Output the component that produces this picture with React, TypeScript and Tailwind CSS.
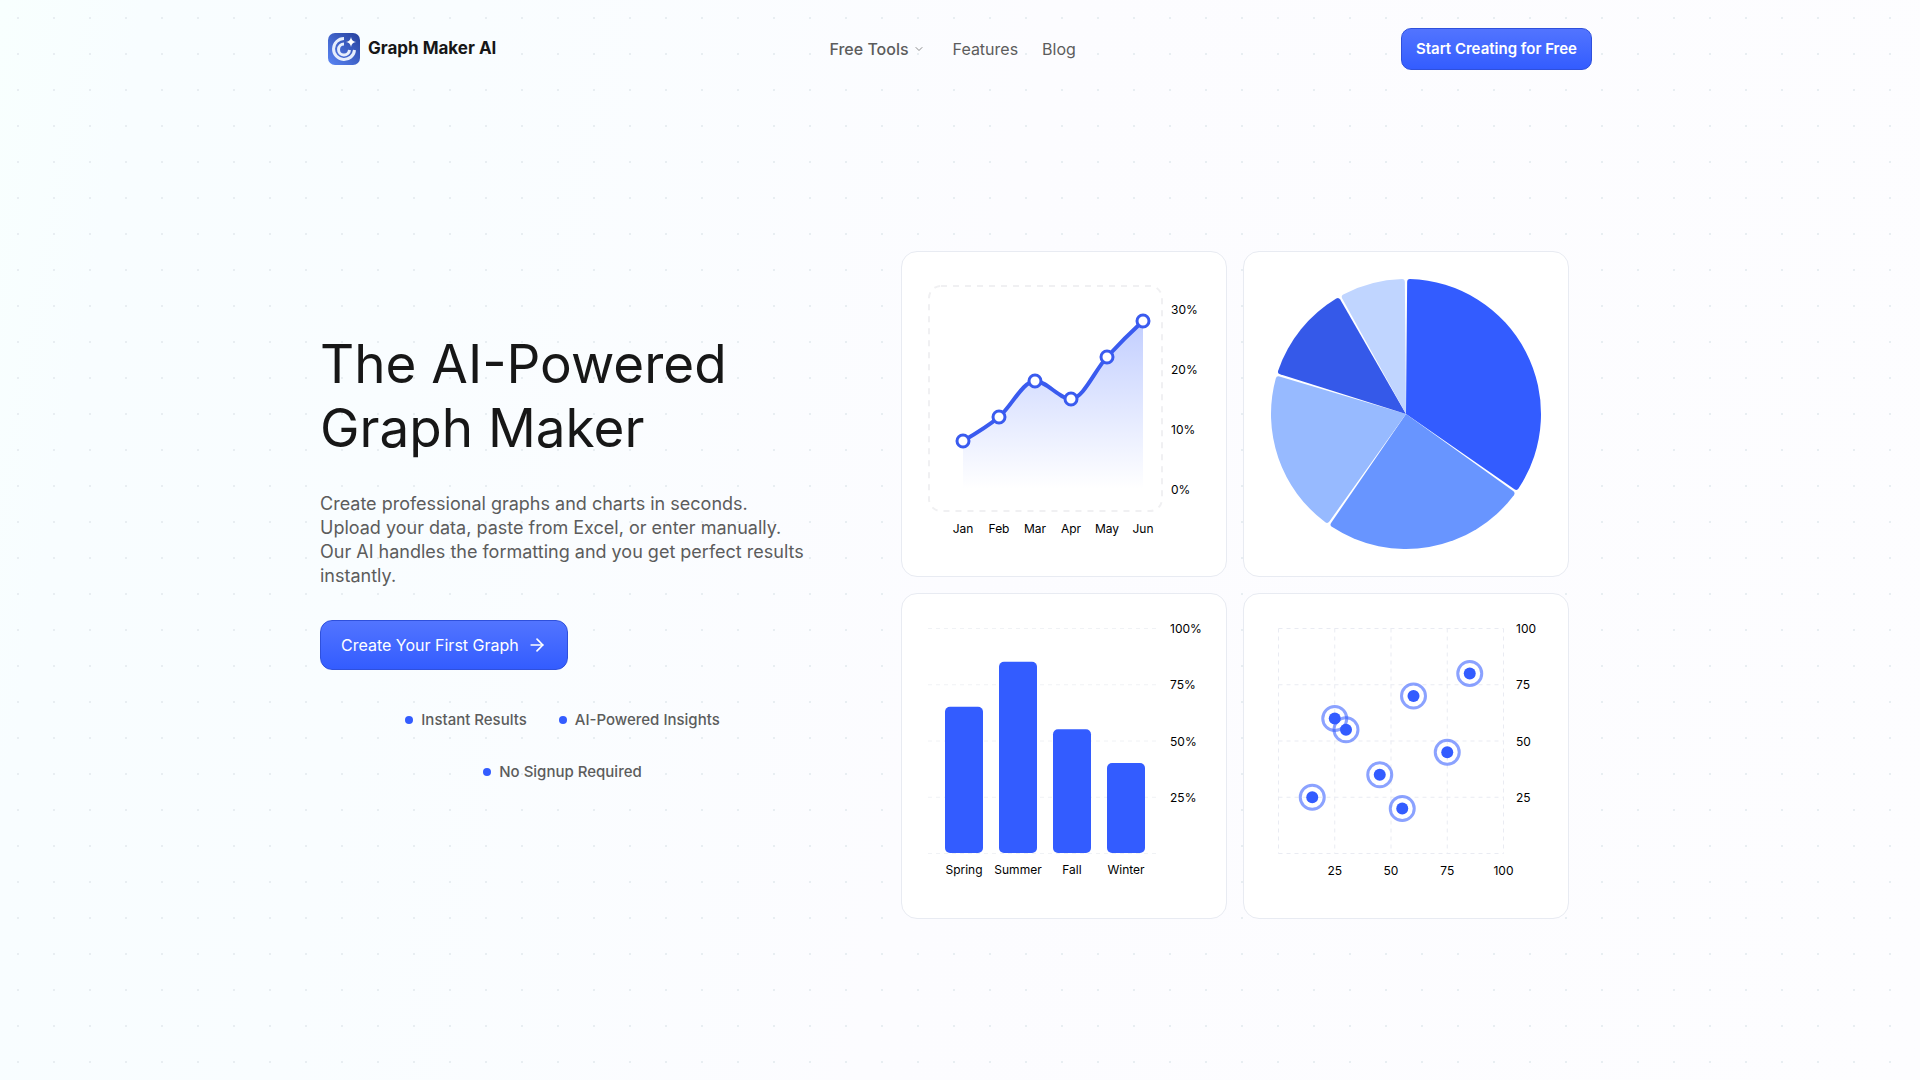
import { ArrowRight, ChevronDown } from "lucide-react";

const months = ["Jan", "Feb", "Mar", "Apr", "May", "Jun"];
const linePoints = [
  [61, 189],
  [97, 165],
  [133, 129],
  [169, 147],
  [205, 105],
  [241, 69],
];
const linePath =
  "M61 189C73 182 85 175 97 165C109 155 121 129 133 129C145 129 157 147 169 147C181 147 193 118 205 105C217 92 229 80 241 69";

const labelClass = "fill-black text-[12px]";

function LineChart() {
  return (
    <svg viewBox="0 0 324 324" className="block w-full" role="img" aria-label="Line chart">
      <defs>
        <linearGradient id="area" x1="0" y1="0" x2="0" y2="1">
          <stop offset="0" stopColor="#335cff" stopOpacity="0.3" />
          <stop offset="1" stopColor="#335cff" stopOpacity="0" />
        </linearGradient>
      </defs>
      <rect x="27" y="34" width="233" height="225" rx="12" fill="none" stroke="#f0f0f2" strokeWidth="2" strokeDasharray="6 6" />
      <path d={`${linePath}V237H61Z`} fill="url(#area)" />
      <path d={linePath} fill="none" stroke="#3a5bef" strokeWidth="4" strokeLinecap="round" />
      {linePoints.map(([x, y], i) => (
        <g key={months[i]}>
          <circle cx={x} cy={y} r="6" fill="#fff" stroke="#3a5bef" strokeWidth="3" />
          <text x={x} y="281" textAnchor="middle" className={labelClass}>
            {months[i]}
          </text>
        </g>
      ))}
      {["30%", "20%", "10%", "0%"].map((t, i) => (
        <text key={t} x="269" y={62 + i * 60} className={labelClass}>
          {t}
        </text>
      ))}
    </svg>
  );
}

const slices = [
  { share: 0.35, color: "#335cff" },
  { share: 0.25, color: "#6895ff" },
  { share: 0.2, color: "#97baff" },
  { share: 0.12, color: "#3559e9" },
  { share: 0.08, color: "#c0d5ff" },
];

function polar(deg: number, r: number) {
  const a = ((deg - 90) * Math.PI) / 180;
  return `${(162 + r * Math.cos(a)).toFixed(2)} ${(162 + r * Math.sin(a)).toFixed(2)}`;
}

function slicePath(start: number, end: number) {
  const r = 135;
  const corner = 3;
  const turn = 1.2;
  return [
    `M162 162L${polar(start, r - corner)}`,
    `Q${polar(start, r)} ${polar(start + turn, r)}`,
    `A${r} ${r} 0 0 1 ${polar(end - turn, r)}`,
    `Q${polar(end, r)} ${polar(end, r - corner)}Z`,
  ].join("");
}

function PieChart() {
  let angle = 0.5;
  return (
    <svg viewBox="0 0 324 324" className="block w-full" role="img" aria-label="Pie chart">
      {slices.map(({ share, color }) => {
        const start = angle;
        const end = start + share * 355;
        angle = end + 1;
        return <path key={color} d={slicePath(start, end)} fill={color} />;
      })}
    </svg>
  );
}

const bars = [
  { name: "Spring", value: 65 },
  { name: "Summer", value: 85 },
  { name: "Fall", value: 55 },
  { name: "Winter", value: 40 },
];
const ticks = [0, 25, 50, 75, 100];

function BarChart() {
  return (
    <svg viewBox="0 0 324 324" className="block w-full" role="img" aria-label="Bar chart">
      {ticks.map((t) => (
        <g key={t}>
          <path d={`M26 ${259.5 - t * 2.25}H258`} stroke="#f0f2f5" strokeDasharray="4 4" />
          {t > 0 && (
            <text x="268" y={264 - t * 2.25} className={labelClass}>
              {t}%
            </text>
          )}
        </g>
      ))}
      {bars.map(({ name, value }, i) => (
        <g key={name}>
          <rect x={43 + i * 54} y={259 - value * 2.25} width="38" height={value * 2.25} rx="5" fill="#335cff" />
          <text x={62 + i * 54} y="280" textAnchor="middle" className={labelClass}>
            {name}
          </text>
        </g>
      ))}
    </svg>
  );
}

const dots = [
  [15, 25],
  [25, 60],
  [30, 55],
  [45, 35],
  [55, 20],
  [60, 70],
  [75, 45],
  [85, 80],
];

function ScatterChart() {
  return (
    <svg viewBox="0 0 324 324" className="block w-full" role="img" aria-label="Scatter chart">
      {ticks.map((t) => (
        <g key={t}>
          <path
            d={`M34.5 ${259.5 - t * 2.25}H259.5M${34.5 + t * 2.25} 34.5V259.5`}
            stroke="#e9ebf2"
            strokeDasharray="4 4"
            fill="none"
          />
          {t > 0 && (
            <>
              <text x="272" y={264 - t * 2.25} className={labelClass}>
                {t}
              </text>
              <text x={34.5 + t * 2.25} y="281" textAnchor="middle" className={labelClass}>
                {t}
              </text>
            </>
          )}
        </g>
      ))}
      {dots.map(([x, y]) => (
        <g key={x} transform={`translate(${34.5 + x * 2.25} ${259.5 - y * 2.25})`}>
          <circle r="12" fill="none" stroke="#335cff" strokeOpacity="0.57" strokeWidth="3" />
          <circle r="6" fill="#335cff" />
        </g>
      ))}
    </svg>
  );
}

function Logo() {
  return (
    <svg viewBox="0 0 32 32" className="size-8" aria-hidden="true">
      <defs>
        <linearGradient id="logo" x1="1" y1="0" x2="0" y2="1">
          <stop offset="0" stopColor="#26409c" />
          <stop offset="1" stopColor="#5a86f5" />
        </linearGradient>
      </defs>
      <rect width="32" height="32" rx="7" fill="url(#logo)" />
      <path d="M16 5.500A10.500 10.500 0 1 0 26.500 17" fill="none" stroke="#e6eefc" strokeWidth="3" />
      <path d="M16 11A5.500 5.500 0 1 0 21.500 17" fill="none" stroke="#e6eefc" strokeWidth="3" />
      <path d="M23 4Q23.700 8.300 28 9Q23.700 9.700 23 14Q22.300 9.700 18 9Q22.300 8.300 23 4Z" fill="#fff" />
    </svg>
  );
}

function Feature({ children }: { children: string }) {
  return (
    <li className="flex items-center gap-2">
      <span className="size-2 rounded-full bg-[#335cff]" />
      {children}
    </li>
  );
}

const card = "rounded-2xl border border-[#e8ebf2] bg-white";

export default function App() {
  return (
    <div className="min-h-screen bg-[radial-gradient(circle_at_center,#e8eef2_1px,transparent_1px),linear-gradient(100deg,#f8fffe_0%,#f8fdff_7%,#f9fdff_22%,#fcfcff_50%,#fdfdff_100%)] bg-[size:36px_36px,100%_100%] font-['Inter',sans-serif] text-[#171717]">
      <header className="mx-auto flex h-[98px] max-w-[1280px] items-center justify-between px-2">
        <a href="#" className="flex items-center gap-2 text-[17px] font-bold">
          <Logo />
          Graph Maker AI
        </a>
        <nav className="flex items-center gap-6 pl-2 text-base text-[#5c5c5c]">
          <button type="button" className="mr-1 flex items-center gap-1 font-medium">
            Free Tools
            <ChevronDown className="size-3 text-[#8c8c8c]" />
          </button>
          <a href="#features">Features</a>
          <a href="#blog">Blog</a>
        </nav>
        <a
          href="#start"
          className="rounded-[10px] border border-[#2f50dc] bg-linear-to-b from-[#5274ff] to-[#335cff] px-[14px] py-[10px] text-[15px] leading-5 font-semibold text-white"
        >
          Start Creating for Free
        </a>
      </header>

      <main className="mx-auto flex max-w-[1280px] items-center gap-24 pt-[153px] pr-[31px] pb-40">
        <section className="min-w-0 flex-1 pb-14">
          <h1 className="text-[53px] leading-[64px] font-normal">
            The AI-Powered
            <br />
            Graph Maker
          </h1>
          <p className="mt-8 text-lg leading-6 text-[#5c5c5c]">
            Create professional graphs and charts in seconds.
            <br />
            Upload your data, paste from Excel, or enter manually.
            <br />
            Our AI handles the formatting and you get perfect results instantly.
          </p>
          <a
            href="#create"
            className="mt-8 inline-flex h-[50px] items-center gap-2 rounded-xl border border-[#2f50dc] bg-linear-to-b from-[#5274ff] to-[#335cff] px-5 text-base text-white"
          >
            Create Your First Graph
            <ArrowRight className="size-5" />
          </a>
          <ul className="mt-10 flex flex-wrap justify-center gap-8 px-6 text-[15px] leading-5 font-medium text-[#5c5c5c]">
            <Feature>Instant Results</Feature>
            <Feature>AI-Powered Insights</Feature>
            <Feature>No Signup Required</Feature>
          </ul>
        </section>

        <section className="grid w-[668px] grid-cols-2 gap-4" aria-label="Chart examples">
          <div className={card}>
            <LineChart />
          </div>
          <div className={card}>
            <PieChart />
          </div>
          <div className={card}>
            <BarChart />
          </div>
          <div className={card}>
            <ScatterChart />
          </div>
        </section>
      </main>
    </div>
  );
}
